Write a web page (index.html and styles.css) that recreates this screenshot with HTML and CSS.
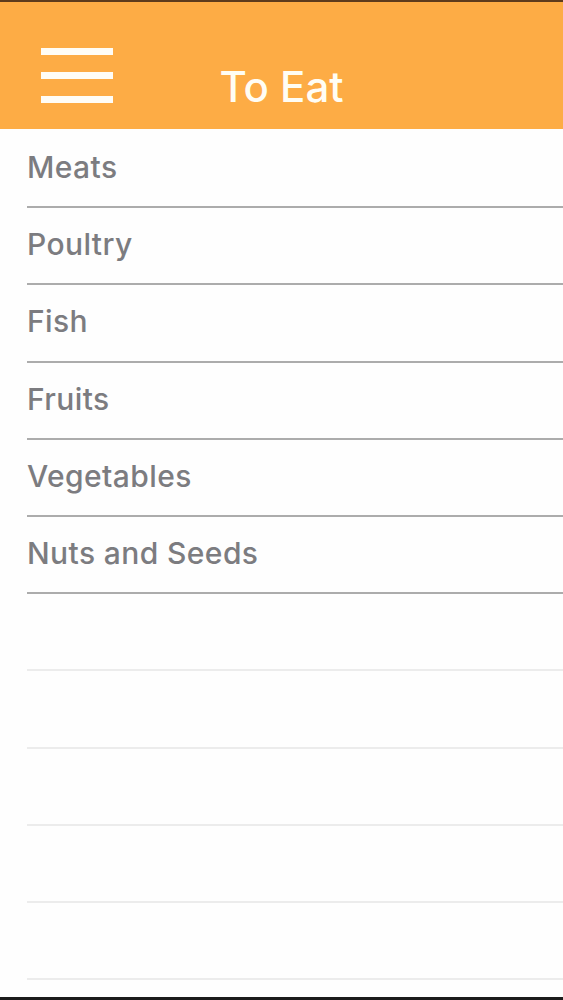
FILE: index.html
```html
<!DOCTYPE html>
<html lang="en">

<head>
    <meta charset="UTF-8">
    <meta name="viewport" content="width=device-width, initial-scale=1.0">

    <link rel="stylesheet" href="styles.css">

    <title>To Eat</title>
</head>

<body>
    <div class="screen">
        <div class="header">
            <div class="menu">
                <span class="bar"></span>
                <span class="bar"></span>
                <span class="bar"></span>
            </div>
            <h1 class="titulo">To Eat</h1>
            <div></div>
        </div>
        <ul class="lista">
            <li class="fila">Meats</li>
            <li class="fila">Poultry</li>
            <li class="fila">Fish</li>
            <li class="fila">Fruits</li>
            <li class="fila">Vegetables</li>
            <li class="fila">Nuts and Seeds</li>
            <li class="fila vacia"></li>
            <li class="fila vacia"></li>
            <li class="fila vacia"></li>
            <li class="fila vacia"></li>
            <li class="fila vacia"></li>
        </ul>
    </div>
</body>

</html>
```

FILE: styles.css
```css
body {
    margin: 0;
    background-color: #fefefe;
    font-family: Inter, 'Liberation Sans', sans-serif;
}

.screen {
    height: 1000px;
    box-sizing: border-box;
    display: flex;
    flex-direction: column;
    overflow: hidden;
    border-bottom: 3px solid #1c1c1c;
}

.header {
    height: 129px;
    flex-shrink: 0;
    box-sizing: border-box;
    border-top: 2px solid #5e3b1c;
    background-color: #fdac45;
    display: grid;
    grid-template-columns: 1fr auto 1fr;
    align-items: start;
}

.menu {
    display: flex;
    flex-direction: column;
    gap: 17.5px;
    width: 72px;
    margin-top: 46px;
    margin-left: 41px;
}

.bar {
    display: block;
    height: 6.5px;
    background-color: #fffdf6;
}

.titulo {
    margin: 63.5px 0 0 0;
    font-size: 42px;
    line-height: 1;
    font-weight: 500;
    color: #fffdf4;
}

.lista {
    list-style: none;
    margin: 0;
    padding: 2px 0 0 0;
}

.fila {
    height: 77.2px;
    box-sizing: border-box;
    margin-left: 27px;
    padding-bottom: 3px;
    display: flex;
    align-items: center;
    border-bottom: 2px solid #acacac;
    font-size: 30px;
    line-height: 1;
    font-weight: 500;
    letter-spacing: 0.4px;
    color: #7c7c80;
}

.vacia {
    border-bottom: 2px solid #ececec;
}
```
